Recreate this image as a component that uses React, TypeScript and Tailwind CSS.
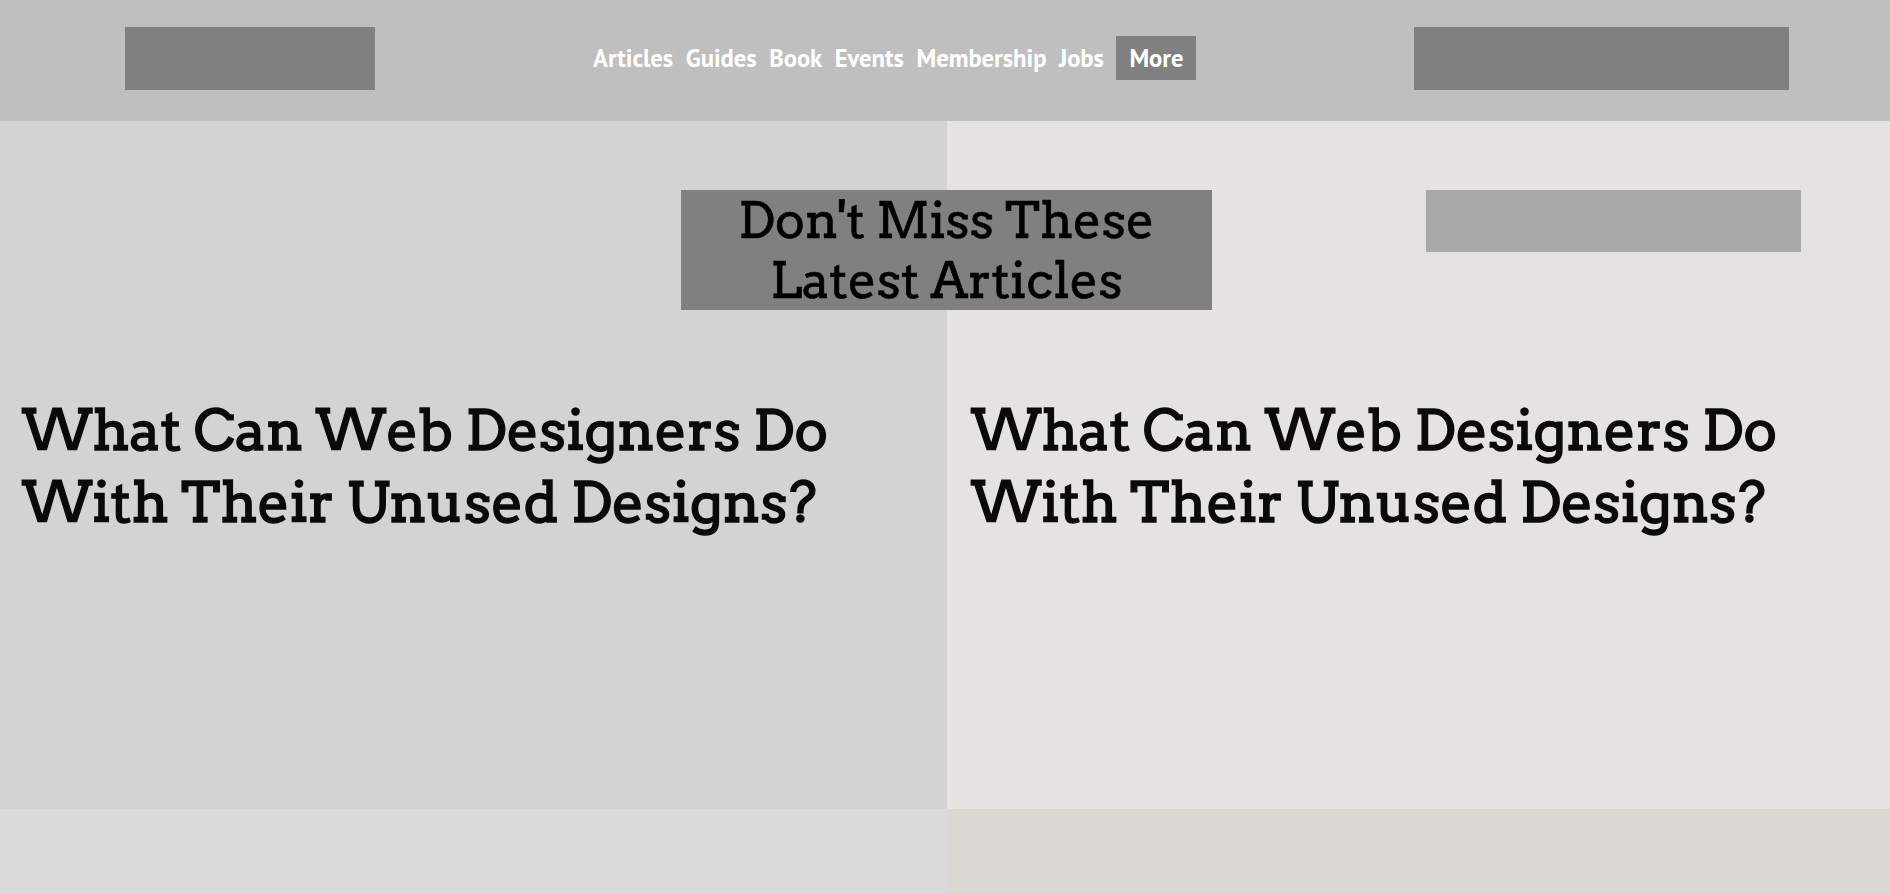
const slab = "font-['Arvo','DejaVu_Serif',serif]";

const navItems = ["Articles", "Guides", "Book", "Events", "Membership", "Jobs"];

function Header() {
  return (
    <header className="h-[121px] bg-[#bfbfbf] flex items-start">
      <div className="ml-[125px] mt-[27px] w-[250px] h-[63px] bg-[#808080]" />
      <nav className="ml-[218px] mt-[36px] h-[44px] flex items-center font-['PT_Sans','Lato',sans-serif] text-[24.6px] font-bold text-white">
        {navItems.map((item) => (
          <a key={item} className="mr-[12.5px] leading-none">
            {item}
          </a>
        ))}
        <a className="h-[44px] px-[13px] flex items-center bg-[#808080]">More</a>
      </nav>
      <div className="ml-auto mr-[101px] mt-[27px] w-[375px] h-[63px] bg-[#808080]" />
    </header>
  );
}

function Title() {
  return (
    <h2
      className={`${slab} text-[56.3px] leading-[72px] font-normal text-[#0a0a0a] [-webkit-text-stroke:1.4px_#0a0a0a]`}
    >
      What Can Web Designers Do
      <br />
      With Their Unused Designs?
    </h2>
  );
}

export default function App() {
  return (
    <div className="w-[1890px] h-[894px] overflow-hidden">
      <Header />
      <section className="relative flex h-[688px]">
        <div className="w-[947px] bg-[#d3d3d3] px-[22px]">
          <div className="h-[273px]" />
          <Title />
        </div>
        <div className="flex-1 bg-[#e4e3e1] px-[24px]">
          <div className="h-[273px] pt-[69px]">
            <div className="ml-[455px] w-[375px] h-[62px] bg-[#a9a9a9]" />
          </div>
          <Title />
        </div>
        <h1
          className={`absolute left-[681px] top-[69px] w-[531px] bg-[#808080] text-center ${slab} text-[50px] leading-[60px] font-normal text-black [-webkit-text-stroke:0.6px_#000]`}
        >
          Don&apos;t Miss These
          <br />
          Latest Articles
        </h1>
      </section>
      <footer className="flex h-[85px]">
        <div className="w-[947px] bg-[#dadada]" />
        <div className="flex-1 bg-[#dbd8d4]" />
      </footer>
    </div>
  );
}
